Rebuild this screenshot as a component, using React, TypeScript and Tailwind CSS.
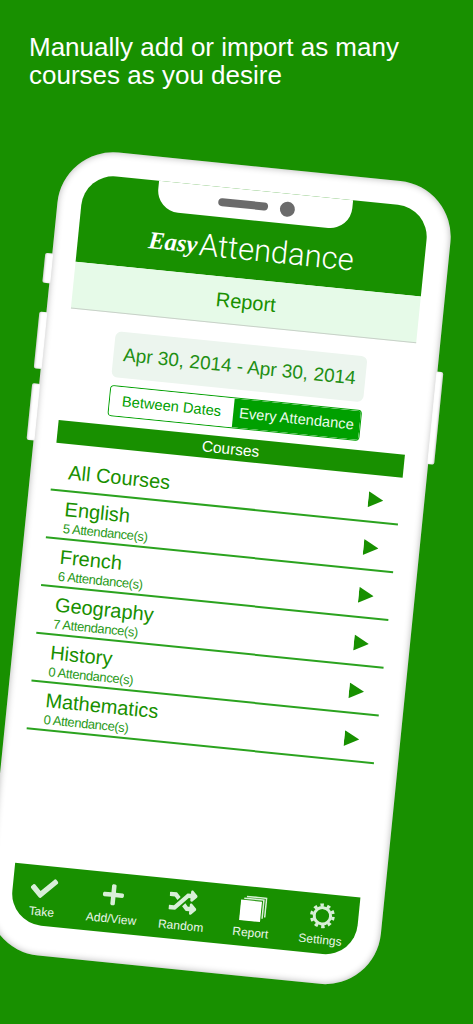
import { FaCheck, FaPlus, FaRandom } from "react-icons/fa";

const rows = [
  { name: "English", sub: "5 Attendance(s)" },
  { name: "French", sub: "6 Attendance(s)" },
  { name: "Geography", sub: "7 Attendance(s)" },
  { name: "History", sub: "0 Attendance(s)" },
  { name: "Mathematics", sub: "0 Attendance(s)" },
];

function Arrow() {
  return (
    <svg width="15" height="16" viewBox="0 0 15 16" className="shrink-0">
      <polygon points="0,0 15,8 0,16" fill="#189000" />
    </svg>
  );
}

function Gear() {
  return (
    <svg width="26" height="26" viewBox="0 0 26 26" fill="none" stroke="#d8efd8">
      <circle cx="13" cy="13" r="8.2" strokeWidth="3" />
      <circle cx="13" cy="13" r="10.8" strokeWidth="3.2" strokeDasharray="3.4 3.39" />
    </svg>
  );
}

function Pages() {
  return (
    <svg width="27" height="26" viewBox="0 0 27 26">
      <path d="M6 0.5 H26.5 V20.5 H25 V2 H6 Z" fill="#d8efd8" />
      <path d="M3.5 2.5 H24 V22 H22.5 V4 H3.5 Z" fill="#d8efd8" />
      <rect x="0.5" y="5" width="21" height="20.5" fill="#ffffff" />
    </svg>
  );
}

const tabs = [
  { label: "Take", icon: <FaCheck size={27} color="#d8efd8" /> },
  { label: "Add/View", icon: <FaPlus size={24} color="#d8efd8" /> },
  { label: "Random", icon: <FaRandom size={28} color="#d8efd8" /> },
  { label: "Report", icon: <Pages /> },
  { label: "Settings", icon: <Gear /> },
];

export default function App() {
  return (
    <div className="h-[1024px] w-full overflow-hidden bg-[#189000] font-['Liberation_Sans',sans-serif]">
      <h1 className="pl-[29px] pt-[33px] text-[26px] leading-[28px] font-normal text-white">
        Manually add or import as many
        <br />
        courses as you desire
      </h1>

      <div className="relative ml-[63px] mt-[58px] h-[807px] w-[395px] origin-top-left rotate-[5.74deg] rounded-[56px] bg-white p-[24px] shadow-[inset_0_0_7px_rgba(0,0,0,0.3)]">
        <div className="absolute -left-[7px] top-[107px] h-[30px] w-[8px] rounded-l-[2px] bg-white shadow-[inset_1px_0_2px_rgba(0,0,0,0.2)]" />
        <div className="absolute -left-[7px] top-[166px] h-[57px] w-[8px] rounded-l-[2px] bg-white shadow-[inset_1px_0_2px_rgba(0,0,0,0.2)]" />
        <div className="absolute -left-[7px] top-[238px] h-[57px] w-[8px] rounded-l-[2px] bg-white shadow-[inset_1px_0_2px_rgba(0,0,0,0.2)]" />
        <div className="absolute -right-[6px] top-[186px] h-[93px] w-[7px] rounded-r-[2px] bg-white shadow-[inset_-1px_0_2px_rgba(0,0,0,0.2)]" />

        <div className="relative flex h-[753px] w-[347px] flex-col bg-white">
          <div className="absolute left-[75px] top-0 flex h-[30px] w-[195px] items-center justify-center gap-[12px] rounded-b-[22px] bg-white pl-[4px]">
            <div className="h-[8px] w-[50px] rounded-full bg-[#6b6b6b]" />
            <div className="h-[15px] w-[15px] rounded-full bg-[#6b6b6b]" />
          </div>

          <div className="flex h-[89px] items-end justify-center rounded-t-[32px] bg-[#189000] pb-[9px] text-white">
            <span className="mr-[2px] font-['Liberation_Serif',serif] text-[24.5px] leading-[40px] font-bold italic">Easy</span>
            <span className="font-['Roboto',sans-serif] text-[31px] leading-[40px] font-light">Attendance</span>
          </div>

          <div className="flex h-[47px] items-center justify-center border-b border-[#c8d0c8] bg-[#e6fae8] text-[20px] text-[#189000]">
            Report
          </div>

          <div className="mx-[47px] mt-[18px] flex h-[46px] items-center justify-center rounded-[6px] bg-[#ecf5ee] text-[19px] text-[#1f8f14]">
            Apr 30, 2014 - Apr 30, 2014
          </div>

          <div className="mx-[47px] mt-[8px] flex h-[31px] overflow-hidden rounded-[4px] border-[1.5px] border-[#00a000] text-[14.7px]">
            <div className="flex w-[124px] items-center justify-center bg-white text-[#00a000]">Between Dates</div>
            <div className="flex flex-1 items-center justify-center bg-[#00a000] text-[#ecfbec]">Every Attendance</div>
          </div>

          <div className="-ml-[1px] mt-[9px] flex h-[23px] items-center justify-center bg-[#189000] text-[15.5px] text-white">Courses</div>

          <div className="-ml-[2px] flex h-[48px] items-start justify-between border-b-2 border-[#2ba31f] pl-[16px] pr-[17px] pt-[15px]">
            <span className="text-[20px] leading-[26px] text-[#189000]">All Courses</span>
            <span className="pt-[2px]"><Arrow /></span>
          </div>
          {rows.map((r) => (
            <div key={r.name} className="-ml-[2px] flex h-[48px] items-start justify-between border-b-2 border-[#2ba31f] pl-[16px] pr-[17px] pt-[6px]">
              <div className="flex flex-col">
                <span className="text-[20px] leading-[23px] text-[#189000]">{r.name}</span>
                <span className="text-[13px] leading-[15px] tracking-[-0.4px] text-[#2a9a20]">{r.sub}</span>
              </div>
              <span className="pt-[11px]"><Arrow /></span>
            </div>
          ))}

          <div className="mt-auto flex h-[60px] justify-start rounded-b-[32px] bg-[#189000]">
            <div className="-ml-[4px] flex">
              {tabs.map((t) => (
                <div key={t.label} className="flex w-[70px] flex-col items-center pt-[8px]">
                  <div className="flex h-[28px] items-center justify-center">{t.icon}</div>
                  <span className="mt-[3px] text-[12px] leading-[14px] text-[#eaf6ea]">{t.label}</span>
                </div>
              ))}
            </div>
          </div>
        </div>
      </div>
    </div>
  );
}
